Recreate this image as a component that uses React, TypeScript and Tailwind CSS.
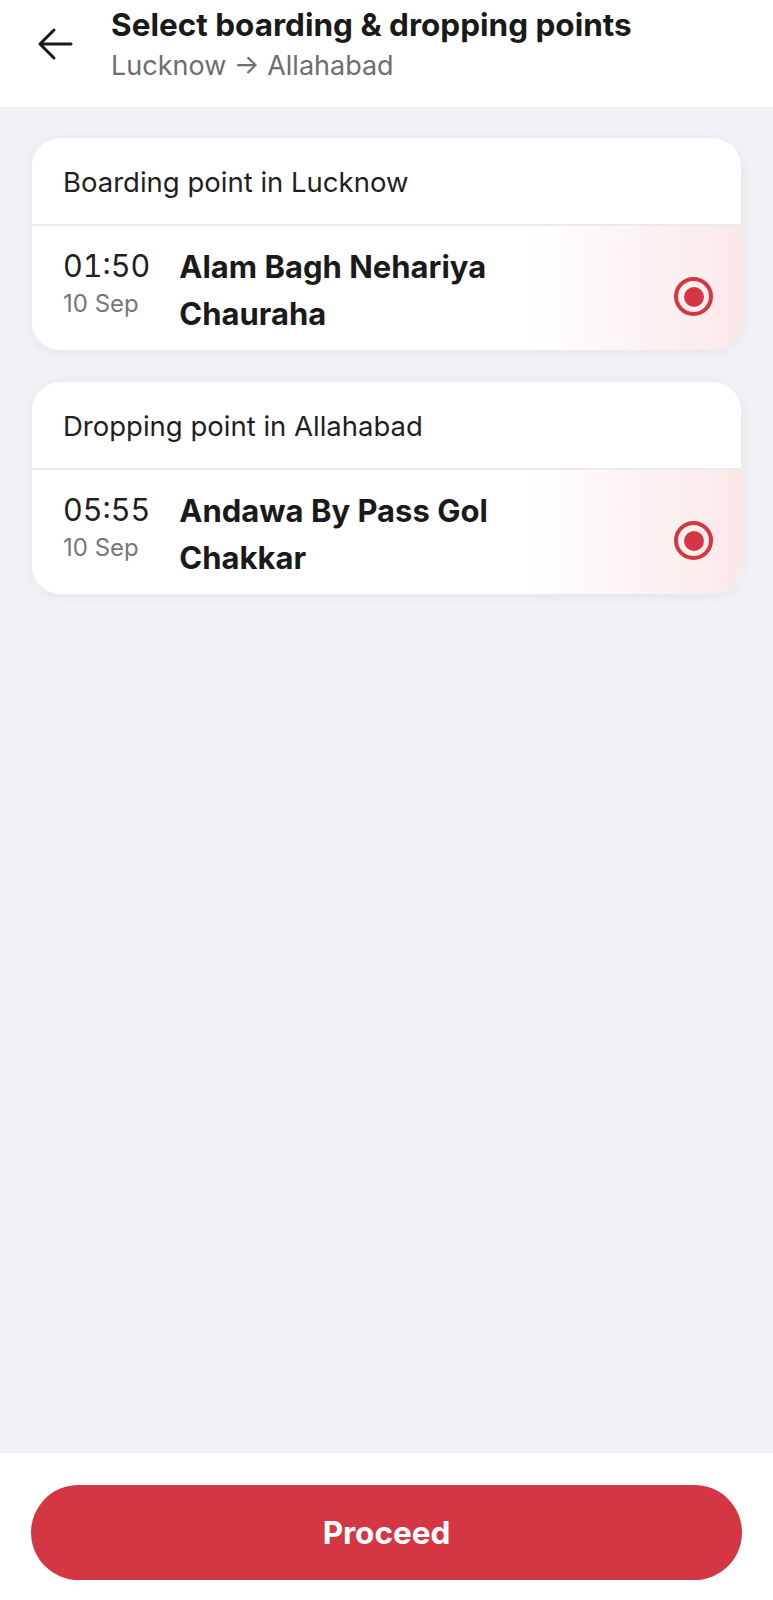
import React from 'react'

interface StopPoint {
  label: string
  time: string
  date: string
  name: string
}

const points: StopPoint[] = [
  {
    label: 'Boarding point in Lucknow',
    time: '01:50',
    date: '10 Sep',
    name: 'Alam Bagh Nehariya Chauraha',
  },
  {
    label: 'Dropping point in Allahabad',
    time: '05:55',
    date: '10 Sep',
    name: 'Andawa By Pass Gol Chakkar',
  },
]

function BackArrow() {
  return (
    <svg width="36" height="34" viewBox="0 0 36 34" fill="none">
      <path
        d="M34 17H3M17 3L3 17l14 14"
        stroke="#1a1a1a"
        strokeWidth="3"
        strokeLinecap="round"
        strokeLinejoin="round"
      />
    </svg>
  )
}

function RadioSelected() {
  return (
    <div className="w-[39px] h-[39px] rounded-full border-[4px] border-[#d33743] flex items-center justify-center">
      <div className="w-[20px] h-[20px] rounded-full bg-[#d33743]" />
    </div>
  )
}

function PointCard({ point }: { point: StopPoint }) {
  return (
    <div className="bg-white rounded-[28px] overflow-hidden shadow-[0_2px_14px_rgba(0,0,0,0.06)]">
      {/* header */}
      <div className="h-[86px] flex items-center px-[31px] pt-[3px] text-[27.5px] text-[#1f1f1f]">
        {point.label}
      </div>
      <div className="h-[2px] bg-[#ebebef]" />

      {/* selected row */}
      <div className="flex items-start pl-[31px] pr-[28px] pt-[17px] pb-[13px] bg-linear-to-r from-white from-70% to-[#fbe8e9]">
        <div className="flex flex-col">
          <span className="text-[30.5px] leading-[46px] tabular-nums text-[#1f1f1f]">{point.time}</span>
          <span className="text-[24px] leading-[30px] text-[#777777]">{point.date}</span>
        </div>
        <div className="ml-[29px] w-[360px] text-[31px] leading-[47px] font-bold text-[#1a1a1a]">
          {point.name}
        </div>
        <div className="ml-auto mt-[34px]">
          <RadioSelected />
        </div>
      </div>
    </div>
  )
}

export default function App() {
  return (
    <div
      className="h-[1600px] flex flex-col bg-white"
      style={{ fontFamily: 'Inter, "Noto Sans", sans-serif' }}
    >
      {/* top bar */}
      <div className="h-[107px] flex items-start pl-[37px] shrink-0">
        <div className="mt-[27px]">
          <BackArrow />
        </div>
        <div className="ml-[38px] pt-[5px]">
          <div className="text-[31.5px] leading-[40px] font-bold text-[#1a1a1a]">
            Select boarding &amp; dropping points
          </div>
          <div className="text-[27px] leading-[42px] text-[#6e6e6e]">
            Lucknow → Allahabad
          </div>
        </div>
      </div>

      {/* content */}
      <div className="flex-1 bg-[#f1f1f6] px-[32px] pt-[31px] flex flex-col gap-[32px]">
        {points.map((p) => (
          <PointCard key={p.label} point={p} />
        ))}
      </div>

      {/* footer */}
      <div className="h-[147px] shrink-0 bg-white px-[31px] pt-[32px]">
        <button className="w-full h-[95px] rounded-full bg-[#d43743] text-white text-[31.5px] font-bold">
          Proceed
        </button>
      </div>
    </div>
  )
}
